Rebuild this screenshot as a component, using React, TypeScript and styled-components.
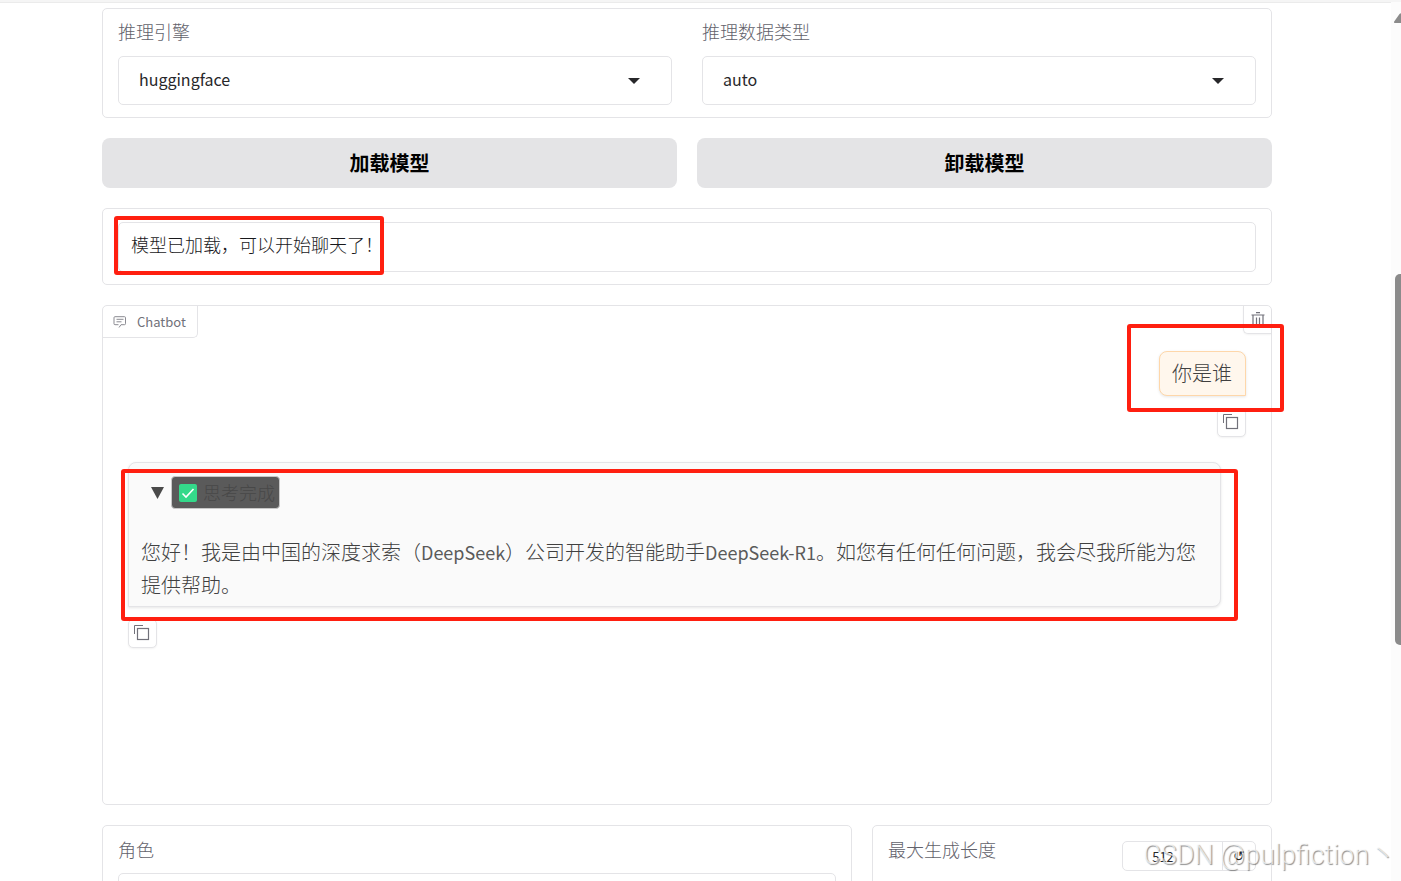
import React from 'react';
import styled, { createGlobalStyle, css } from 'styled-components';

const GlobalStyle = createGlobalStyle`
  * { box-sizing: border-box; }
  html, body { margin: 0; padding: 0; background: #fff; }
  body, button, input, select, textarea {
    font-family: "Noto Sans CJK SC", sans-serif;
    font-weight: 300;
  }
`;

const line = '#e4e4e7';

const Page = styled.div`
  position: relative;
  display: grid;
  grid-template-columns: minmax(0, 1fr) 10px;
  height: 100vh;
  overflow: hidden;
  border-top: 2px solid #f5f5f5;
`;

const Main = styled.main`
  display: flex;
  flex-direction: column;
  gap: 20px;
  padding: 5px 119px 0 102px;
  border-top: 1px solid #ebebeb;
  color: #27272a;
`;

const ScrollTrack = styled.div`
  position: relative;
  background: #fcfcfc;
`;

const ScrollArrow = styled.svg`
  position: absolute;
  top: 11px;
  left: 3px;
  width: 14px;
  height: 10px;
`;

const ScrollThumb = styled.div`
  position: absolute;
  top: 272px;
  left: 4px;
  width: 12px;
  height: 371px;
  border-radius: 5px;
  background: #8b8b8b;
`;

const Card = styled.section`
  flex: none;
  border: 1px solid ${line};
  border-radius: 5px;
  background: #fff;
`;

const EngineCard = styled(Card)`
  display: grid;
  grid-template-columns: 1fr 1fr;
  gap: 30px;
  padding: 9px 15px 12px;
`;

const Field = styled.div`
  display: flex;
  flex-direction: column;
  gap: 11px;
`;

const Label = styled.label`
  font-size: 18px;
  line-height: 27px;
  color: #62626b;
`;

const SelectBox = styled.div`
  position: relative;
  display: flex;

  svg {
    position: absolute;
    right: 32px;
    top: 22px;
    width: 12px;
    height: 6px;
    pointer-events: none;
  }
`;

const Select = styled.select`
  appearance: none;
  width: 100%;
  height: 49px;
  padding: 0 20px 3px;
  border: 1px solid ${line};
  border-radius: 5px;
  background: #fff;
  color: #27272a;
  font-size: 16px;
  font-weight: 400;
`;

const ButtonRow = styled.div`
  display: grid;
  grid-template-columns: 1fr 1fr;
  gap: 20px;
`;

const ActionButton = styled.button`
  height: 50px;
  padding: 0 0 2px;
  border: 0;
  border-radius: 8px;
  background: #e4e4e6;
  color: #000;
  font-size: 20px;
  font-weight: 700;
`;

const StatusCard = styled(Card)`
  padding: 13px 15px 12px;
`;

const StatusField = styled.div`
  position: relative;
  display: flex;
`;

const textInput = css`
  width: 100%;
  border: 1px solid ${line};
  border-radius: 5px;
  background: #fff;
  color: #18181b;
  font-size: 18px;
`;

const StatusInput = styled.input`
  ${textInput}
  height: 50px;
  padding: 0 12px 7px;
`;

const Mark = styled.div<{ $inset: string }>`
  position: absolute;
  inset: ${(p) => p.$inset};
  z-index: 2;
  border: 4px solid #ff1f10;
  border-radius: 3px;
  pointer-events: none;
`;

const StatusMark = styled(Mark)`
  width: 270px;
`;

const ChatCard = styled(Card)`
  height: 500px;
`;

const ChatHeader = styled.header`
  display: flex;
  justify-content: space-between;
  align-items: flex-start;
  height: 32px;
`;

const ChatTitle = styled.h2`
  display: flex;
  align-items: center;
  gap: 10px;
  height: 32px;
  margin: 0;
  padding: 0 11px 0 10px;
  border: solid ${line};
  border-width: 0 1px 1px 0;
  border-radius: 5px 0;
  color: #71717a;
  font-size: 13px;
  font-weight: 400;
`;

const ClearButton = styled.button`
  display: grid;
  place-items: center;
  width: 28px;
  height: 28px;
  padding: 0;
  border: solid ${line};
  border-width: 0 0 1px 1px;
  border-radius: 0 5px;
  background: #fff;
  box-shadow: 0 1px 2px #0000000d;
`;

const Messages = styled.div`
  display: flex;
  flex-direction: column;
  padding: 13px 25px 0;
  color: #404040;
  font-size: 20px;
  line-height: 33px;
`;

const Turn = styled.div<{ $own?: boolean }>`
  display: flex;
  flex-direction: column;
  align-items: ${(p) => (p.$own ? 'flex-end' : 'stretch')};
  gap: 12px;
  margin: ${(p) => (p.$own ? '0 0 25px' : '0 25px 0 0')};
`;

const Bubble = styled.div<{ $own?: boolean }>`
  position: relative;
  border: 1px solid ${(p) => (p.$own ? '#fed7aa' : line)};
  border-radius: ${(p) => (p.$own ? '8px 8px 0 8px' : '8px 8px 8px 0')};
  padding: ${(p) => (p.$own ? '4px 13px 6px 12px' : '13px 12px 5px')};
  background: ${(p) => (p.$own ? '#fff7ed' : '#fafafa')};
  box-shadow: 0 1px 3px #0000001a;
`;

const CopyButton = styled.button<{ $own?: boolean }>`
  display: grid;
  place-items: center;
  align-self: ${(p) => (p.$own ? 'flex-end' : 'flex-start')};
  width: 29px;
  height: 29px;
  padding: 0 2px 2px 0;
  border: 1px solid ${line};
  border-radius: 5px;
  background: #fff;
  box-shadow: 0 1px 2px #0000000d;
`;

const Thinking = styled.details`
  margin-bottom: 26px;
`;

const Summary = styled.summary`
  display: flex;
  align-items: center;
  gap: 7px;
  padding-left: 10px;
  list-style: none;
`;

const Badge = styled.span`
  display: flex;
  align-items: center;
  gap: 6px;
  height: 33px;
  padding: 0 4px 0 7px;
  border: 1px solid #c8c8c8;
  border-radius: 4px;
  background: #5a5a5a;
  color: #484848;
  font-size: 18px;
`;

const Answer = styled.p`
  margin: 0;
`;

const Latin = styled.span`
  font-size: 18px;
  font-weight: 400;
  line-height: 18px;
  color: #5a5a5a;
`;

const BottomRow = styled.div`
  display: grid;
  grid-template-columns: 15fr 8fr;
  gap: 20px;
`;

const RoleCard = styled(Card)`
  padding: 10px 15px;
`;

const RoleField = styled(Field)`
  gap: 10px;
`;

const RoleInput = styled.textarea`
  ${textInput}
  height: 80px;
  resize: none;
`;

const LengthCard = styled(Card)`
  display: flex;
  justify-content: space-between;
  align-items: flex-start;
  padding: 10px 15px;
`;

const Stepper = styled.div`
  display: flex;
  height: 30px;
  margin-top: 5px;
  border: 1px solid ${line};
  border-radius: 5px;
`;

const LengthInput = styled.input`
  width: 100px;
  padding: 0 19px 0 0;
  border: 0;
  border-right: 1px solid ${line};
  background: none;
  color: #27272a;
  font-size: 13px;
  font-weight: 400;
  text-align: center;
`;

const ResetButton = styled.button`
  width: 32px;
  padding: 0;
  border: 0;
  background: none;
  color: #27272a;
  font-family: "DejaVu Sans", sans-serif;
  font-size: 14px;
`;

const Watermark = styled.div`
  position: absolute;
  right: 5px;
  bottom: 8px;
  z-index: 3;
  color: #ffffffb0;
  font-family: Roboto, "Noto Sans CJK SC", sans-serif;
  font-size: 27px;
  font-weight: 300;
  line-height: 36px;
  text-shadow: 1px 1px 1px #00000070;
  white-space: nowrap;
`;

const Caret = () => (
  <svg viewBox="0 0 12 6" aria-hidden="true">
    <path d="M0 0h12L6 6z" fill="#27272a" />
  </svg>
);

const CopyIcon = () => (
  <svg width="16" height="16" viewBox="0 0 16 16" fill="none" stroke="#71717a" aria-hidden="true">
    <path d="M.5 9V.5H9" />
    <rect x="3.5" y="3.500" width="11" height="11" strokeWidth="1.2" />
  </svg>
);

const TrashIcon = () => (
  <svg width="14" height="16" viewBox="0 0 14 16" fill="none" stroke="#71717a" aria-hidden="true">
    <path d="M5 .7h4M.5 3h13M2 3v12h10V3M5.500 5.500v7M8.500 5.500v7" strokeWidth="1.2" />
  </svg>
);

const ChatIcon = () => (
  <svg width="14" height="12" viewBox="0 0 14 12" fill="none" stroke="#8b8b92" aria-hidden="true">
    <path d="M6 11.500 8 8.700h3.500a1 1 0 0 0 1-1v-6a1 1 0 0 0-1-1h-9.500a1 1 0 0 0-1 1v6a1 1 0 0 0 1 1h3.500M3.500 3.300h7M3.500 5.800h5" />
  </svg>
);

const CheckIcon = () => (
  <svg width="18" height="18" viewBox="0 0 18 18" aria-hidden="true">
    <rect width="18" height="18" rx="2" fill="#34d98a" />
    <path d="M3.500 9.500 7 13l7.500-8" fill="none" stroke="#fff" strokeWidth="1.6" />
  </svg>
);

const Triangle = () => (
  <svg width="13" height="12" viewBox="0 0 13 12" aria-hidden="true">
    <path d="M0 0h13L6.500 12z" fill="#4a4a4a" />
  </svg>
);

export default function App() {
  return (
    <>
      <GlobalStyle />
      <Page>
        <Main>
          <EngineCard>
            <Field>
              <Label htmlFor="engine">推理引擎</Label>
              <SelectBox>
                <Select id="engine" defaultValue="huggingface">
                  <option>huggingface</option>
                </Select>
                <Caret />
              </SelectBox>
            </Field>
            <Field>
              <Label htmlFor="dtype">推理数据类型</Label>
              <SelectBox>
                <Select id="dtype" defaultValue="auto">
                  <option>auto</option>
                </Select>
                <Caret />
              </SelectBox>
            </Field>
          </EngineCard>

          <ButtonRow>
            <ActionButton>加载模型</ActionButton>
            <ActionButton>卸载模型</ActionButton>
          </ButtonRow>

          <StatusCard>
            <StatusField>
              <StatusInput aria-label="状态" readOnly value="模型已加载，可以开始聊天了！" />
              <StatusMark $inset="-6px auto -3px -4px" />
            </StatusField>
          </StatusCard>

          <ChatCard>
            <ChatHeader>
              <ChatTitle><ChatIcon />Chatbot</ChatTitle>
              <ClearButton aria-label="清空"><TrashIcon /></ClearButton>
            </ChatHeader>
            <Messages>
              <Turn $own>
                <Bubble $own>
                  你是谁
                  <Mark $inset="-28px -39px -17px -33px" />
                </Bubble>
                <CopyButton $own aria-label="复制"><CopyIcon /></CopyButton>
              </Turn>
              <Turn>
                <Bubble>
                  <Thinking open>
                    <Summary>
                      <Triangle />
                      <Badge><CheckIcon />思考完成</Badge>
                    </Summary>
                  </Thinking>
                  <Answer>
                    您好！我是由中国的深度求索（<Latin>DeepSeek</Latin>）公司开发的智能助手<Latin>DeepSeek-R1</Latin>。如您有任何任何问题，我会尽我所能为您提供帮助。
                  </Answer>
                  <Mark $inset="6px -18px -15px -8px" />
                </Bubble>
                <CopyButton aria-label="复制"><CopyIcon /></CopyButton>
              </Turn>
            </Messages>
          </ChatCard>

          <BottomRow>
            <RoleCard>
              <RoleField>
                <Label htmlFor="role">角色</Label>
                <RoleInput id="role" />
              </RoleField>
            </RoleCard>
            <LengthCard>
              <Label htmlFor="length">最大生成长度</Label>
              <Stepper>
                <LengthInput id="length" defaultValue="512" />
                <ResetButton aria-label="重置">↺</ResetButton>
              </Stepper>
            </LengthCard>
          </BottomRow>
        </Main>
        <ScrollTrack>
          <ScrollArrow viewBox="0 0 14 10" aria-hidden="true">
            <path d="M1 10a1 1 0 0 1-.8-1.600L5.500 1a2 2 0 0 1 3 0l5.300 7.400A1 1 0 0 1 13 10z" fill="#8b8b8b" />
          </ScrollArrow>
          <ScrollThumb />
        </ScrollTrack>
        <Watermark>CSDN @pulpfiction丶</Watermark>
      </Page>
    </>
  );
}
